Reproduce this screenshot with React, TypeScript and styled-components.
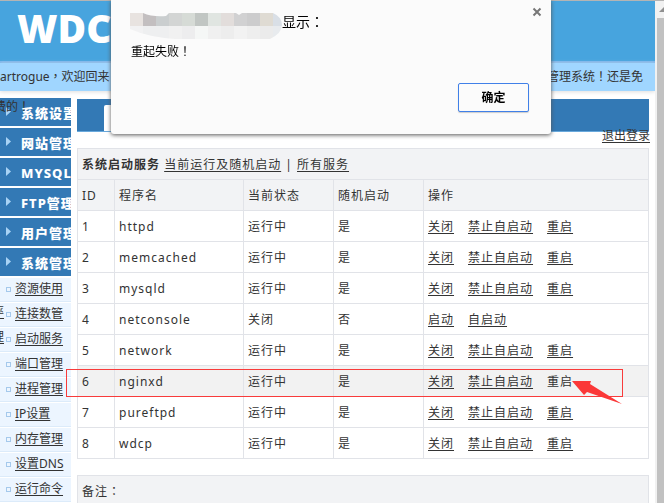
import React from 'react';
import styled, { createGlobalStyle, css } from 'styled-components';

const sans = `"Noto Sans", "Noto Sans CJK SC", sans-serif`;

const GlobalStyle = createGlobalStyle`
  *, *::before { box-sizing: border-box; }
  html, body, #root { height: 100%; }
  body {
    margin: 0;
    overflow: hidden;
    background: #fff;
    color: #333;
    font: 12px/18px ${sans};
  }
`;

const Window = styled.div`
  display: flex;
  height: 100%;
  border-top: 1px solid #b4b4b4;
`;

const Page = styled.div`
  flex: 1;
  min-width: 0;
  overflow: hidden;
`;

const Header = styled.header`
  height: 62px;
  padding-left: 17px;
  overflow: hidden;
  background: #47a4de;
  border-bottom: 2px solid #7ab5ec;
`;

const Logo = styled.h1`
  margin: 0;
  color: #fff;
  font: 800 39px/54px "Open Sans", sans-serif;
`;

const Welcome = styled.div`
  position: relative;
  display: flex;
  justify-content: space-between;
  height: 28px;
  padding-right: 12px;
  background: #a0d6ff;
  line-height: 28px;
  white-space: nowrap;
  box-shadow: 0 1px 4px #ddd;
`;

const WelcomeRest = styled.span`
  position: absolute;
  left: -6px;
  top: 30px;
`;

/* Full-width punctuation centred in its em box. */
const Mark = styled.span`
  font-family: "Noto Sans CJK TC", sans-serif;
  line-height: 1;
`;

const Columns = styled.div`
  display: flex;
  gap: 6px;
  padding: 7px 6px 0 0;
`;

const Sidebar = styled.nav`
  flex: none;
  width: 71px;
  overflow: hidden;
  white-space: nowrap;
`;

const Group = styled.button`
  display: flex;
  align-items: center;
  gap: 9px;
  width: 100%;
  height: 28px;
  margin: 0 0 2px;
  padding: 2px 0 0 6px;
  border: 0;
  background: #3379b5;
  color: #fff;
  font: 800 13px/18px ${sans};
  letter-spacing: 1px;
`;

const Triangle = styled.svg`
  flex: none;
  width: 6px;
  height: 9px;
  margin-bottom: 3px;
  fill: #a9d3f5;
`;

const SubList = styled.ul`
  margin: -1px 0 0;
  padding: 0;
  list-style: none;
`;

const SubItem = styled.li`
  position: relative;
  display: flex;
  align-items: center;
  gap: 4px;
  height: 25px;
  padding-left: 6px;
  background: #ecf5ff;
  border-bottom: 1px solid #dcebfa;
  box-shadow: inset 0 1px #fff;

  &::before {
    content: "";
    flex: none;
    width: 5px;
    height: 5px;
    border: 1px solid #a5c9ec;
  }
`;

const Link = styled.a<{ $plain?: boolean }>`
  color: #333;
  text-decoration: ${p => (p.$plain ? 'none' : 'underline')};
  text-underline-offset: 2px;
`;

/* Last character of a label too long for the sidebar, dropped to the next row. */
const Tail = styled.span`
  position: absolute;
  z-index: 1;
  left: -8px;
  top: 26px;
  text-decoration: underline;
  text-underline-offset: 2px;
`;

const Main = styled.main`
  flex: 1;
  min-width: 0;
`;

const TabBar = styled.div`
  height: 33px;
  margin-top: 1px;
  padding: 6px 0 0 27px;
  background: #3379b5;
  border-bottom: 1px solid #69a9dc;
`;

const ActiveTab = styled.div`
  width: 80px;
  height: 100%;
  border-radius: 2px 2px 0 0;
  background: #fff;
`;

const Account = styled.div`
  height: 16px;
  margin: -4px -1px 4px 0;
  line-height: 16px;
  text-align: right;
`;

const tableBorder = css`1px solid #e1e3e8`;

const Services = styled.table`
  width: 100%;
  table-layout: fixed;
  border-collapse: collapse;
  letter-spacing: 1px;
`;

const Col = styled.col<{ $width?: number }>`
  width: ${p => (p.$width ? `${p.$width}px` : 'auto')};
`;

const Row = styled.tr<{ $active?: boolean }>`
  height: 31px;
  background: ${p => (p.$active ? '#f2f2f2' : '#fff')};
`;

const Cell = styled.td`
  padding: 1px 4px 0;
  border: ${tableBorder};
`;

const HeadCell = styled.th`
  padding: 1px 4px 0;
  border: ${tableBorder};
  background: #f2f3f5;
  font-weight: normal;
  text-align: left;
`;

const Actions = styled.div`
  display: flex;
  gap: 14px;
`;

const Notes = styled.section`
  height: 60px;
  margin-top: 16px;
  padding: 7px 4px;
  border: ${tableBorder};
  background: #f2f3f5;
  letter-spacing: 1px;
`;

const Scrollbar = styled.div`
  flex: none;
  width: 9px;
  padding-left: 2px;
  overflow: hidden;
  background: #f1f1f1;
`;

const ScrollArrow = styled.svg`
  display: block;
  width: 7px;
  height: 17px;
  fill: #8f8f8f;
`;

const Thumb = styled.div`
  height: 100%;
  background: #c1c1c1;
`;

const Highlight = styled.div`
  position: absolute;
  left: 66px;
  right: 41px;
  top: 369px;
  height: 28px;
  border: 1px solid #f83b3b;
`;

const Arrow = styled.svg`
  position: absolute;
  left: 572px;
  top: 380px;
  width: 52px;
  height: 26px;
  fill: #fb3838;
`;

const Overlay = styled.div`
  position: fixed;
  inset: 0 2px auto 0;
  display: flex;
  justify-content: center;
`;

const Dialog = styled.div`
  position: relative;
  display: flex;
  flex-direction: column;
  width: 440px;
  padding: 12px 22px 22px 19px;
  border-radius: 0 0 3px 3px;
  background: #fbfbfb;
  color: #000;
  box-shadow: 0 1px 4px #555;
`;

const DialogTitle = styled.h2`
  display: flex;
  align-items: center;
  height: 27px;
  margin: 0;
  font: 14px/18px ${sans};
`;

const DialogOrigin = styled.span`
  margin-top: -8px;
`;

const Redacted = styled.svg`
  width: 152px;
  height: 27px;
`;

const Message = styled.p`
  margin: 4px 0 22px 1px;
`;

const Confirm = styled.button`
  align-self: flex-end;
  width: 71px;
  height: 29px;
  padding: 0;
  border: 1px solid #4080e8;
  border-radius: 2px;
  background: #fbfbfb;
  color: #000;
  font: bold 12px/18px ${sans};
  box-shadow: 0 1px 1px #ccc;
`;

const Close = styled.button`
  position: absolute;
  top: 7px;
  right: 9px;
  display: flex;
  padding: 0;
  border: 0;
  background: none;
`;

const groups = ['系统设置', '网站管理', 'MYSQL管理', 'FTP管理', '用户管理', '系统管理'];
const subItems = [
  { name: '资源使用', tail: '率' },
  { name: '连接数管', tail: '理' },
  { name: '启动服务' },
  { name: '端口管理' },
  { name: '进程管理' },
  { name: 'IP设置' },
  { name: '内存管理' },
  { name: '设置DNS' },
  { name: '运行命令' },
];
const services = ['httpd', 'memcached', 'mysqld', 'netconsole', 'network', 'nginxd', 'pureftpd', 'wdcp'];
const mosaic = ['#e8e3e0', '#c3bfc0', '#cacecf', '#d3d5d4', '#d6dbd6', '#c1c6c3', '#e0e5e1', '#e2dddb', '#d1d1d2', '#cccccd', '#dfdbd3', '#d9dfe6'];
const mosaicLow = ['#f2f2f3', '#eeeff0', '#eeeff0', '#f1f1f1', '#ededee', '#f5f7f6', '#f0f0f0', '#ededed', '#f2f2f2', '#eeeeee', '#ebebeb', '#e8ebee'];

export default function App() {
  return (
    <>
      <GlobalStyle />
      <Window>
        <Page>
          <Header><Logo>WDCP</Logo></Header>
          <Welcome>
            <span>artrogue<Mark>，</Mark>欢迎回来</span>
            <span>管理系统<Mark>！</Mark>还是免</span>
            <WelcomeRest>费的<Mark>！</Mark></WelcomeRest>
          </Welcome>
          <Columns>
            <Sidebar>
              {groups.map(name => (
                <Group key={name}>
                  <Triangle viewBox="0 0 6 9"><path d="M0 0 5 4.500 0 9z" /></Triangle>
                  {name}
                </Group>
              ))}
              <SubList>
                {subItems.map(({ name, tail }) => (
                  <SubItem key={name}>
                    <Link href="#">{name}{tail && <Tail>{tail}</Tail>}</Link>
                  </SubItem>
                ))}
              </SubList>
            </Sidebar>
            <Main>
              <TabBar><ActiveTab /></TabBar>
              <Account><Link href="#">退出登录</Link></Account>
              <Services>
                <colgroup>
                  <Col $width={37} /><Col $width={129} /><Col $width={90} /><Col $width={90} /><Col />
                </colgroup>
                <thead>
                  <Row>
                    <HeadCell colSpan={5}>
                      <b>系统启动服务</b> <Link href="#">当前运行及随机启动</Link> | <Link href="#">所有服务</Link>
                    </HeadCell>
                  </Row>
                  <Row>
                    {['ID', '程序名', '当前状态', '随机启动', '操作'].map(h => <HeadCell key={h}>{h}</HeadCell>)}
                  </Row>
                </thead>
                <tbody>
                  {services.map((name, i) => {
                    const off = name === 'netconsole';
                    const active = name === 'nginxd';
                    return (
                      <Row key={name} $active={active}>
                        <Cell>{i + 1}</Cell>
                        <Cell>{name}</Cell>
                        <Cell>{off ? '关闭' : '运行中'}</Cell>
                        <Cell>{off ? '否' : '是'}</Cell>
                        <Cell>
                          <Actions>
                            <Link href="#">{off ? '启动' : '关闭'}</Link>
                            <Link href="#">{off ? '自启动' : '禁止自启动'}</Link>
                            {!off && <Link href="#" $plain={active}>重启</Link>}
                          </Actions>
                        </Cell>
                      </Row>
                    );
                  })}
                </tbody>
              </Services>
              <Notes>备注<Mark>：</Mark></Notes>
            </Main>
          </Columns>
        </Page>
        <Scrollbar>
          <ScrollArrow viewBox="0 0 7 17"><path d="M2 11 7 6v5z" /></ScrollArrow>
          <Thumb />
        </Scrollbar>
      </Window>
      <Highlight />
      <Arrow viewBox="0 0 52 26"><path d="M0 1 19 1 18 4 50 24 15 12 12 15z" /></Arrow>
      <Overlay>
        <Dialog role="alertdialog" aria-labelledby="dialog-title">
          <DialogTitle id="dialog-title">
            <Redacted viewBox="0 0 152 27" aria-hidden="true">
              <clipPath id="smudge"><path d="M0 1H13Q22 5 36 4L39 1H106L109 3 112 1H143Q152 5 152 13T140 27H45Q18 25 0 17z" /></clipPath>
              <g clipPath="url(#smudge)">
                {mosaic.map((c, i) => <rect key={i} x={i * 13} y="1" width="13" height="13" fill={c} />)}
                {mosaicLow.map((c, i) => <rect key={i} x={i * 13} y="14" width="13" height="13" fill={c} />)}
              </g>
            </Redacted>
            <DialogOrigin>显示<Mark>：</Mark></DialogOrigin>
          </DialogTitle>
          <Message>重起失败<Mark>！</Mark></Message>
          <Confirm>确定</Confirm>
          <Close aria-label="关闭">
            <svg width="10" height="10" viewBox="0 0 10 10" stroke="#777" strokeWidth="2"><path d="M1.500 1.500 8.500 8.500M8.500 1.500 1.500 8.500" /></svg>
          </Close>
        </Dialog>
      </Overlay>
    </>
  );
}
